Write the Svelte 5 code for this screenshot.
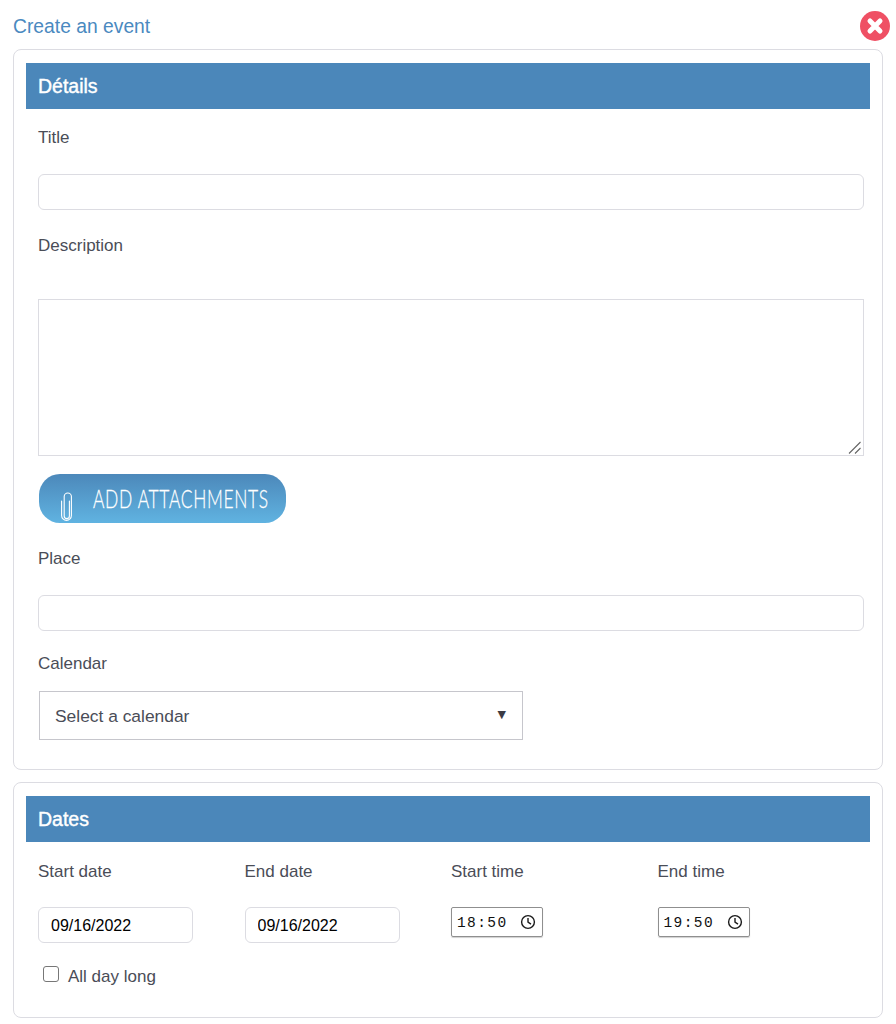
<script>
  let title = $state("");
  let description = $state("");
  let place = $state("");
  let calendar = $state("");
  let allDay = $state(false);

  const dates = [
    { label: "Start date", value: "09/16/2022" },
    { label: "End date", value: "09/16/2022" }
  ];
  const times = [
    { label: "Start time", hours: "18", minutes: "50" },
    { label: "End time", hours: "19", minutes: "50" }
  ];
</script>

{#snippet clock()}
  <svg class="clock" viewBox="0 0 16 16" fill="none" stroke="#1a1a1a" stroke-width="1.4">
    <circle cx="8" cy="8" r="6.4"></circle>
    <path d="M8 4v4.2l3 1.9"></path>
  </svg>
{/snippet}

<div class="page">
  <div class="top">
    <h1>Create an event</h1>
    <button class="close" aria-label="Close">
      <svg viewBox="0 0 30 30">
        <circle cx="15" cy="15" r="15" fill="#ef5064"></circle>
        <path d="M10 10l10 10M20 10L10 20" stroke="#fff" stroke-width="5" stroke-linecap="round"></path>
      </svg>
    </button>
  </div>

  <section class="card details">
    <h2>Détails</h2>
    <div class="body">
      <label class="lbl first" for="title">Title</label>
      <input id="title" class="txt gap25" type="text" bind:value={title} />

      <label class="lbl mt23" for="description">Description</label>
      <div class="area">
        <textarea id="description" bind:value={description}></textarea>
        <svg class="grip" viewBox="0 0 13 13" stroke="#666" stroke-width="1.1">
          <path d="M1 12.5L12.5 1M7 12.5L12.5 7"></path>
        </svg>
      </div>

      <button class="attach">
        <svg class="clip" viewBox="0 0 14 30" fill="none" stroke="#fff" stroke-width="1.1" stroke-linecap="round">
          <path d="M9.4 9v15a2.6 2.6 0 0 1-5.2 0V4.6a3.6 3.6 0 0 1 7.2 0V23.5a4.9 4.9 0 0 1-9.8 0V9"></path>
        </svg>
        <span>ADD ATTACHMENTS</span>
      </button>

      <label class="lbl mt23" for="place">Place</label>
      <input id="place" class="txt gap25" type="text" bind:value={place} />

      <label class="lbl mt20" for="calendar">Calendar</label>
      <div class="select-wrap">
        <select id="calendar" bind:value={calendar}>
          <option value="">Select a calendar</option>
        </select>
        <span class="arrow">▼</span>
      </div>
    </div>
  </section>

  <section class="card dates">
    <h2>Dates</h2>
    <div class="grid">
      {#each dates as d}
        <div class="col">
          <span class="lbl">{d.label}</span>
          <input class="txt date" type="text" value={d.value} />
        </div>
      {/each}
      {#each times as t}
        <div class="col">
          <span class="lbl">{t.label}</span>
          <div class="time">
            <span class="digits">{t.hours}:{t.minutes}</span>
            {@render clock()}
          </div>
        </div>
      {/each}
    </div>
    <label class="allday">
      <input type="checkbox" bind:checked={allDay} />
      <span>All day long</span>
    </label>
  </section>
</div>

<style>
  :global(body) {
    margin: 0;
    background: #fff;
    font-family: "Liberation Sans", Arial, sans-serif;
    color: #4a4d57;
  }
  .page {
    padding: 0 13px;
    height: 1024px;
    box-sizing: border-box;
    overflow: hidden;
  }
  .top {
    display: flex;
    justify-content: space-between;
    align-items: center;
    height: 49px;
    padding: 3px 0 0;
    box-sizing: border-box;
    margin-right: -7px;
  }
  h1 {
    margin: 0;
    padding-top: 2px;
    font-size: 19.3px;
    font-weight: 400;
    color: #4a89bf;
    line-height: 24px;
  }
  .close {
    padding: 0;
    border: 0;
    background: none;
    width: 30px;
    height: 30px;
  }
  .close svg {
    display: block;
    width: 30px;
    height: 30px;
  }
  .card {
    border: 1px solid #dcdce2;
    border-radius: 8px;
    padding: 13px 12px 0;
  }
  .details {
    height: 721px;
    box-sizing: border-box;
    margin-bottom: 12px;
  }
  .dates {
    height: 236px;
    box-sizing: border-box;
  }
  h2 {
    margin: 0;
    height: 46px;
    line-height: 46px;
    background: #4b87ba;
    color: #fff;
    font-size: 19.5px;
    font-weight: 400;
    -webkit-text-stroke: 0.4px #fff;
    padding-left: 12px;
  }
  .body {
    display: flex;
    flex-direction: column;
    align-items: flex-start;
    padding: 16px 6px 0 12px;
  }
  .lbl {
    display: block;
    font-size: 17px;
    line-height: 26px;
    margin-bottom: -2px;
    color: #4a4d57;
  }
  .mt23 {
    margin-top: 23px;
  }
  .mt20 {
    margin-top: 20px;
  }
  .txt {
    box-sizing: border-box;
    height: 36px;
    border: 1px solid #dcdce2;
    border-radius: 6px;
    background: #fff;
    padding: 0 12px;
    font: 16px "Liberation Sans", Arial, sans-serif;
    color: #111;
    outline: none;
  }
  .gap25 {
    width: 100%;
    margin-top: 25px;
  }
  .area {
    position: relative;
    width: 100%;
    height: 157px;
    margin-top: 42px;
  }
  textarea {
    display: block;
    box-sizing: border-box;
    width: 100%;
    height: 100%;
    border: 1px solid #dcdce2;
    border-radius: 0;
    outline: none;
    resize: none;
  }
  .grip {
    position: absolute;
    right: 3px;
    bottom: 2px;
    width: 13px;
    height: 13px;
  }
  .attach {
    display: flex;
    align-items: center;
    box-sizing: border-box;
    width: 247px;
    height: 49px;
    margin: 18px 0 0 1px;
    padding: 0;
    border: 0;
    border-radius: 21px;
    color: #fff;
    background: linear-gradient(#4c88ba, #60b3e1);
  }
  .clip {
    flex: none;
    width: 14px;
    height: 30px;
    margin: 17px 0 0 21px;
  }
  .attach span {
    display: block;
    margin-left: 19px;
    font: 300 26px Lato, sans-serif;
    -webkit-text-stroke: 0.3px #fff;
    letter-spacing: 1px;
    white-space: nowrap;
    transform: scaleX(0.67);
    transform-origin: left center;
    position: relative;
    top: -1px;
  }
  .select-wrap {
    position: relative;
    margin: 16px 0 0 1px;
    width: 484px;
  }
  select {
    display: block;
    appearance: none;
    box-sizing: border-box;
    width: 100%;
    height: 49px;
    padding: 0 15px;
    border: 1px solid #c6c6cc;
    border-radius: 0;
    background: #fff;
    font: 17.4px "Liberation Sans", Arial, sans-serif;
    color: #4a4d57;
    outline: none;
  }
  .arrow {
    position: absolute;
    right: 17px;
    top: 16px;
    font-size: 11px;
    line-height: 16px;
    color: #3c3c44;
    font-family: "DejaVu Sans", sans-serif;
    pointer-events: none;
  }
  .grid {
    display: grid;
    grid-template-columns: repeat(4, 206.5px);
    padding: 17px 0 0 12px;
  }
  .col {
    display: flex;
    flex-direction: column;
    align-items: flex-start;
  }
  .date {
    width: 155px;
    margin-top: 24px;
    padding-top: 2px;
    color: #000;
  }
  .time {
    display: flex;
    align-items: center;
    justify-content: space-between;
    box-sizing: border-box;
    width: 92px;
    height: 30px;
    margin-top: 24px;
    padding: 1px 6px 0 5px;
    border: 1px solid #8f8f8f;
    border-radius: 2px;
    box-shadow: 0 1px 1px #d0d0d0;
  }
  .digits {
    font: 14.5px "Liberation Mono", monospace;
    letter-spacing: 1.4px;
    color: #111;
  }
  .clock {
    width: 16px;
    height: 16px;
    margin-top: -2px;
  }
  .allday {
    display: flex;
    align-items: center;
    gap: 9px;
    margin: 21px 0 0 17px;
    height: 24px;
    font-size: 17px;
    line-height: 26px;
    color: #4a4d57;
  }
  .allday span {
    padding-top: 2px;
  }
  .allday input {
    appearance: none;
    box-sizing: border-box;
    width: 16px;
    height: 16px;
    margin: -4px 0 0;
    border: 1px solid #777;
    border-radius: 3px;
    background: #fff;
  }
</style>
